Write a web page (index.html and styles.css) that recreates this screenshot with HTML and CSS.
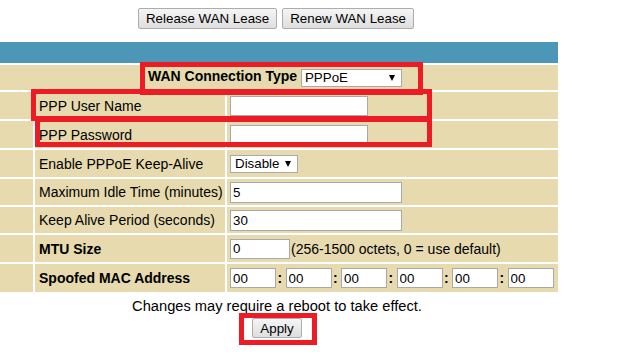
FILE: index.html
```html
<!DOCTYPE html>
<html lang="en">
<head>
    <meta charset="UTF-8">
    <title>WAN Setup</title>
    <link rel="stylesheet" href="styles.css">
</head>
<body>
    <div class="page">
        <div class="lease-buttons">
            <button class="btn btn-release">Release WAN Lease</button>
            <button class="btn btn-renew">Renew WAN Lease</button>
        </div>
        <div class="title-bar"></div>
        <table class="settings">
            <colgroup>
                <col class="col-spacer">
                <col class="col-label">
                <col class="col-value">
            </colgroup>
            <tr class="type-row">
                <td colspan="3">
                    <b>WAN Connection Type</b>
                    <span class="select-wrap"><select class="select select-type"><option>PPPoE</option></select></span>
                </td>
            </tr>
            <tr>
                <td></td>
                <td class="label">PPP User Name</td>
                <td class="value"><input type="text" class="input input-med"></td>
            </tr>
            <tr>
                <td></td>
                <td class="label">PPP Password</td>
                <td class="value"><input type="password" class="input input-med"></td>
            </tr>
            <tr>
                <td></td>
                <td class="label">Enable PPPoE Keep-Alive</td>
                <td class="value"><span class="select-wrap"><select class="select select-small"><option>Disable</option></select></span></td>
            </tr>
            <tr class="tight">
                <td></td>
                <td class="label">Maximum Idle Time (minutes)</td>
                <td class="value"><input type="text" class="input input-wide" value="5"></td>
            </tr>
            <tr class="tight">
                <td></td>
                <td class="label">Keep Alive Period (seconds)</td>
                <td class="value"><input type="text" class="input input-wide" value="30"></td>
            </tr>
            <tr>
                <td></td>
                <td class="label bold">MTU Size</td>
                <td class="value"><input type="text" class="input input-mtu" value="0"><span class="hint">(256-1500 octets, 0 = use default)</span></td>
            </tr>
            <tr class="tall">
                <td></td>
                <td class="label bold">Spoofed MAC Address</td>
                <td class="value">
                    <div class="mac">
                        <input type="text" class="input input-mac" value="00"><b class="colon">:</b>
                        <input type="text" class="input input-mac" value="00"><b class="colon">:</b>
                        <input type="text" class="input input-mac" value="00"><b class="colon">:</b>
                        <input type="text" class="input input-mac" value="00"><b class="colon">:</b>
                        <input type="text" class="input input-mac" value="00"><b class="colon">:</b>
                        <input type="text" class="input input-mac" value="00">
                    </div>
                </td>
            </tr>
        </table>
        <p class="note">Changes may require a reboot to take effect.</p>
        <div class="apply-row"><button class="btn btn-apply">Apply</button></div>

        <!-- red annotation boxes -->
        <div class="mark mark-type"></div>
        <div class="mark mark-user"></div>
        <div class="mark mark-pass"></div>
        <div class="mark mark-apply"></div>
    </div>
</body>
</html>
```

FILE: styles.css
```css
* {
    margin: 0;
    padding: 0;
    box-sizing: border-box;
}
body {
    background: #fff;
    font-family: "Liberation Sans", Arial, sans-serif;
    font-size: 14px;
    color: #000;
}
.page {
    position: relative;
    width: 558px;
    height: 360px;
}
.lease-buttons {
    display: flex;
    justify-content: center;
    gap: 5px;
    padding: 8px 6px 0 0;
}
.btn {
    font-family: "Liberation Sans", Arial, sans-serif;
    font-size: 13.33px;
    color: #000;
    height: 21px;
    padding: 0 7px;
    border: 1px solid #adadad;
    border-radius: 2px;
    background-image: linear-gradient(#f5f5f5, #dedede);
}
.title-bar {
    margin-top: 13px;
    height: 21px;
    background-color: #4c96b8;
}
.settings {
    margin-left: -2px;
    width: 562px;
    table-layout: fixed;
    border-spacing: 2px;
}
.col-spacer {
    width: 33px;
}
.col-label {
    width: 190px;
}
.settings td {
    background-color: #e6daae;
    height: 27px;
    padding: 0;
    vertical-align: middle;
    white-space: nowrap;
}
.settings .type-row td {
    height: 25px;
    text-align: center;
    padding-right: 8px;
}
.settings tr.tight td {
    height: 26px;
}
.settings tr.tall td {
    height: 28px;
}
.label {
    padding-left: 4px !important;
}
.bold {
    font-weight: bold;
}
.value {
    padding-left: 3px !important;
}
.input {
    font-family: "Liberation Sans", Arial, sans-serif;
    font-size: 13.33px;
    color: #000;
    height: 20px;
    padding: 0 2px;
    border: 1px solid #a9a9a9;
    background: #fff;
    vertical-align: middle;
    outline: none;
}
.input-med {
    width: 138px;
}
.input-wide {
    width: 172px;
    height: 21px;
}
.input-mtu {
    width: 60px;
}
.hint {
    vertical-align: middle;
    margin-left: 1px;
}
.mac {
    display: flex;
    align-items: center;
}
.input-mac {
    width: 46px;
}
.colon {
    width: 9.5px;
    text-align: center;
    padding-right: 2px;
}
.select-wrap {
    position: relative;
    display: inline-block;
    vertical-align: middle;
}
.select-wrap::after {
    content: "";
    position: absolute;
    right: 7px;
    top: 6px;
    border-left: 3px solid transparent;
    border-right: 3px solid transparent;
    border-top: 6px solid #000;
    pointer-events: none;
}
.select {
    appearance: none;
    -webkit-appearance: none;
    display: block;
    font-family: "Liberation Sans", Arial, sans-serif;
    font-size: 13.33px;
    color: #000;
    height: 18px;
    padding: 0 0 0 3px;
    border: 1px solid #a9a9a9;
    border-radius: 0;
    background: #fff;
    outline: none;
}
.select-type {
    width: 101px;
}
.select-small {
    width: 68px;
    padding-left: 4px;
}
.note {
    width: 554px;
    margin-top: 4px;
    font-size: 14.67px;
    line-height: 16px;
    text-align: center;
}
.apply-row {
    width: 554px;
    margin-top: 4px;
    text-align: center;
}
.btn-apply {
    height: 20px;
}
.mark {
    position: absolute;
    border: 5px solid #ed1c24;
}
.mark-type {
    left: 140px;
    top: 62px;
    width: 283px;
    height: 33px;
}
.mark-user {
    left: 31px;
    top: 89px;
    width: 401px;
    height: 32px;
}
.mark-pass {
    left: 35px;
    top: 117px;
    width: 397px;
    height: 30px;
}
.mark-apply {
    left: 239px;
    top: 313px;
    width: 78px;
    height: 32px;
}
```
